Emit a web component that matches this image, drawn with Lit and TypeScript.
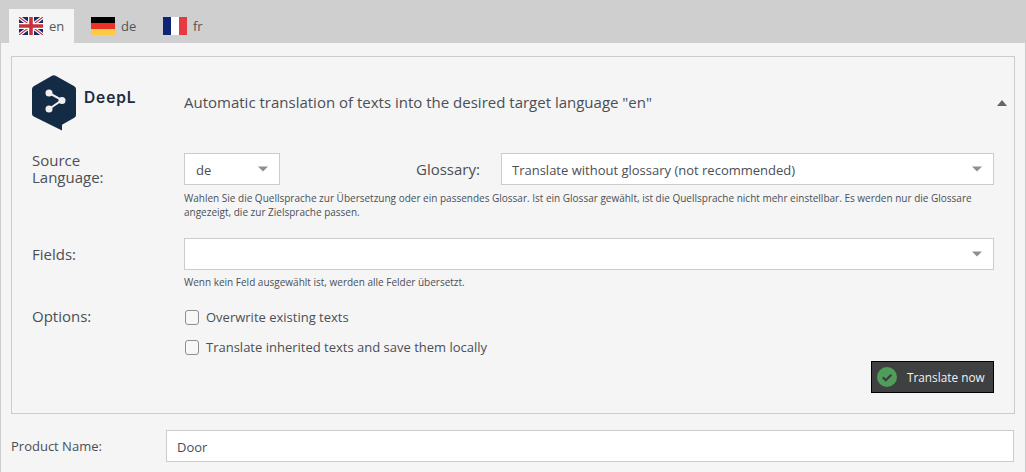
import { LitElement, html, css } from "lit";
import { customElement } from "lit/decorators.js";

const caret = html`<svg class="caret" width="10" height="6" viewBox="0 0 10 6"><path d="M0 .5h10L5 5.500z" fill="#8f8f8f"/></svg>`;

@customElement("app-root")
export class AppRoot extends LitElement {
  static styles = css`
    :host { display: block; width: 1026px; height: 472px; overflow: hidden; background: #f5f5f5; font-family: "Open Sans", sans-serif; color: #4a4f55; font-size: 14px; }
    * { box-sizing: border-box; }
    .tabs { height: 43px; background: #cfcfcf; padding: 9px 0 0 9px; display: flex; gap: 7px; }
    .tab { width: 65px; height: 34px; padding: 8px 0 0 10px; display: flex; gap: 6px; align-items: flex-start; font-size: 13px; line-height: 18px; color: #555; }
    .tab.active { background: #f5f5f5; }
    .tab svg { display: block; flex: none; }
    .page { height: 429px; border: solid #ccc; border-width: 0 1px; padding: 13px 10px 0; }
    .panel { height: 358px; border: 1px solid #ccc; padding: 18px 20px 0; position: relative; display: flex; flex-direction: column; }
    .head { display: flex; height: 56px; align-items: center; }
    .logo { width: 152px; flex: none; display: flex; gap: 8px; align-items: flex-start; height: 56px; }
    .brand { font-family: Inter, sans-serif; font-weight: 600; font-size: 15.5px; line-height: 18px; color: #1b2c45; margin-top: 14px; letter-spacing: .9px; }
    .title { flex: 1; font-size: 15px; line-height: 20px; margin-top: -2px; }
    .up { margin-right: -13px; margin-top: -1px; display: block; }
    .row { display: grid; grid-template-columns: 152px 1fr; }
    .row.source { margin-top: 22px; }
    .row.fields { margin-top: 19px; }
    .row.options { margin-top: 20px; }
    .label { font-size: 15px; line-height: 17px; margin-top: -1px; }
    .fields .label { margin-top: 0; padding-top: 8px; }
    .line { display: flex; align-items: flex-start; }
    .select { height: 32px; background: #fff; border: 1px solid #ccc; display: flex; align-items: center; justify-content: space-between; padding: 0 11px 0 10px; font-size: 13px; color: #4a4f55; }
    .select span { padding-top: 2px; }
    .select.small { width: 96px; padding-left: 11px; }
    .select.wide { flex: 1; }
    .select.full { width: 810px; }
    .gloss { width: 85px; margin-left: 136px; font-size: 15px; line-height: 32px; }
    .hint { font-size: 10px; line-height: 14px; margin-top: 6px; color: #4a4f55; height: 28px; }
    .hint.one { height: 14px; margin-top: 5px; }
    .check { display: flex; align-items: center; gap: 7px; height: 16px; font-size: 13px; margin-left: 1px; }
    .check + .check { margin-top: 14px; }
    .box { width: 14px; height: 15px; border: 1px solid #8f8f8f; border-radius: 3px; background: #f7f7f7; flex: none; }
    .actions { display: flex; justify-content: flex-end; }
    .btn { width: 123px; height: 32px; margin: 6px 0 0; background: #3f4042; border: 1px solid #000; display: flex; align-items: center; padding-left: 5px; color: #f2f2f2; font-size: 11.8px; gap: 10px; }
    .btn svg { display: block; }
    .product { display: grid; grid-template-columns: 155px 848px; margin-top: 16px; align-items: center; }
    .product .pl { font-size: 13px; }
    .input { height: 32px; background: #fff; border: 1px solid #ccc; padding: 0 10px; line-height: 32px; font-size: 13px; color: #4a4f55; }
  `;

  render() {
    return html`
      <div class="tabs">
        <div class="tab active">
          <svg width="24" height="18" viewBox="0 0 24 18"><rect width="24" height="18" fill="#1b2a66"/><path d="M0 0l24 18M24 0L0 18" stroke="#fff" stroke-width="3.4"/><path d="M0 0l24 18M24 0L0 18" stroke="#c8303c" stroke-width="1.1"/><path d="M12 0v18M0 9h24" stroke="#fff" stroke-width="6"/><path d="M12 0v18M0 9h24" stroke="#c8303c" stroke-width="3.6"/></svg>
          <span>en</span>
        </div>
        <div class="tab">
          <svg width="24" height="18" viewBox="0 0 24 18"><rect width="24" height="6" fill="#000"/><rect y="6" width="24" height="6" fill="#ee3124"/><rect y="12" width="24" height="6" fill="#fdcb42"/></svg>
          <span>de</span>
        </div>
        <div class="tab">
          <svg width="24" height="18" viewBox="0 0 24 18"><rect width="8" height="18" fill="#0c2577"/><rect x="8" width="8" height="18" fill="#fff"/><rect x="16" width="8" height="18" fill="#e63a42"/></svg>
          <span>fr</span>
        </div>
      </div>
      <div class="page">
        <div class="panel">
          <div class="head">
            <div class="logo">
              <svg width="44" height="56" viewBox="0 0 44 56"><path d="M20 .8a3.5 3.5 0 0 1 3.6 0L42.3 11.2A3.4 3.4 0 0 1 44 14v26a3.4 3.4 0 0 1-1.700 2.800L30 49.800V55.500L1.700 41.500A3.200 3.200 0 0 1 0 38.700V14a3.400 3.400 0 0 1 1.700-2.800z" fill="#142b45"/><path d="M17 18l13 7-13 9" fill="none" stroke="#f0f0f0" stroke-width="2"/><circle cx="17" cy="18" r="3.500" fill="#f0f0f0"/><circle cx="30" cy="25.500" r="3.500" fill="#f0f0f0"/><circle cx="17" cy="34" r="3.500" fill="#f0f0f0"/></svg>
              <span class="brand">DeepL</span>
            </div>
            <div class="title">Automatic translation of texts into the desired target language "en"</div>
            <svg class="up" width="10" height="6" viewBox="0 0 10 6"><path d="M5 0l5 6H0z" fill="#666"/></svg>
          </div>

          <div class="row source">
            <div class="label">Source<br>Language:</div>
            <div>
              <div class="line">
                <div class="select small"><span>de</span>${caret}</div>
                <div class="gloss">Glossary:</div>
                <div class="select wide"><span>Translate without glossary (not recommended)</span>${caret}</div>
              </div>
              <div class="hint">Wahlen Sie die Quellsprache zur Übersetzung oder ein passendes Glossar. Ist ein Glossar gewählt, ist die Quellsprache nicht mehr einstellbar. Es werden nur die Glossare<br>angezeigt, die zur Zielsprache passen.</div>
            </div>
          </div>

          <div class="row fields">
            <div class="label">Fields:</div>
            <div>
              <div class="select full"><span></span>${caret}</div>
              <div class="hint one">Wenn kein Feld ausgewählt ist, werden alle Felder übersetzt.</div>
            </div>
          </div>

          <div class="row options">
            <div class="label">Options:</div>
            <div>
              <div class="check"><span class="box"></span><span>Overwrite existing texts</span></div>
              <div class="check"><span class="box"></span><span>Translate inherited texts and save them locally</span></div>
            </div>
          </div>

          <div class="actions">
            <div class="btn">
              <svg width="20" height="20" viewBox="0 0 20 20"><circle cx="10" cy="10" r="10" fill="#4f9d58"/><path d="M5.800 10.200l3 3 5.500-5.500" fill="none" stroke="#3a3d40" stroke-width="2.200"/></svg>
              <span>Translate now</span>
            </div>
          </div>
        </div>
        <div class="product">
          <div class="pl">Product Name:</div>
          <div class="input">Door</div>
        </div>
      </div>
    `;
  }
}
